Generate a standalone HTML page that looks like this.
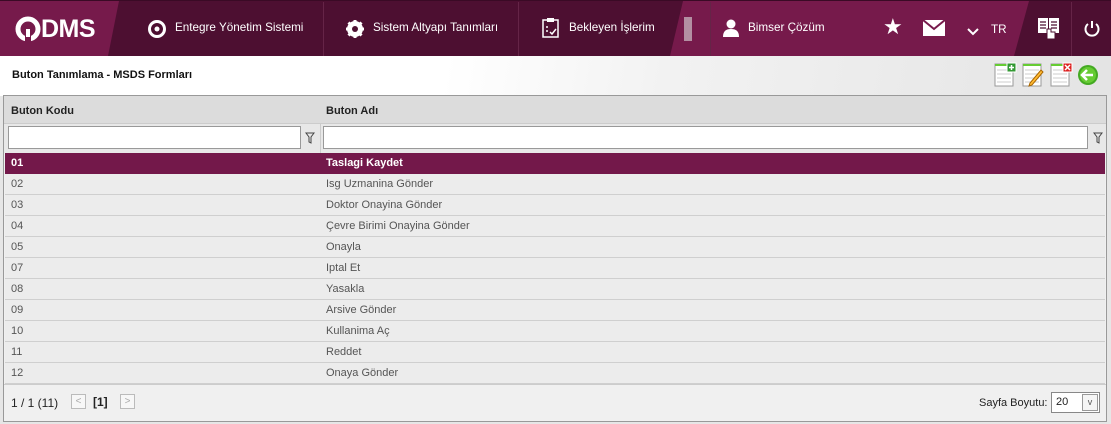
<!DOCTYPE html>
<html><head><meta charset="utf-8"><style>
*{box-sizing:border-box;margin:0;padding:0}
body{width:1111px;height:424px;overflow:hidden;background:#e6e6e6;font-family:"Liberation Sans","DejaVu Sans",sans-serif;position:relative}
.hdr{position:absolute;left:0;top:0;width:1111px;height:56px;background:#4d0f31;border-top:1px solid #3a0a25}
.abs{position:absolute}
.ht{position:absolute;top:20px;color:#fff;font-size:11.7px}
.sep{position:absolute;top:1px;width:1px;height:54px;background:#652447}
.sub{position:absolute;top:56px;left:0;width:1111px;height:40px;background:linear-gradient(100deg,#fff 0,#fff 40%,#f2f2f2 60%,#e4e4e4 100%)}
.title{position:absolute;left:12px;top:69px;font-size:11px;font-weight:bold;color:#111}
.grid{position:absolute;left:3px;top:95px;width:1104px;height:327px;border:1px solid #999;background:#f0f0f0}
.th{position:absolute;left:0;top:0;width:1102px;height:28px;background:#dcdcdc;border-bottom:1px solid #ccc}
.th span{position:absolute;top:9px;font-size:11px;font-weight:bold;color:#222}
.fr{position:absolute;top:28px;left:0;width:1102px;height:29px;background:#e8e8e8}
.inp{position:absolute;top:2px;height:23px;background:#fff;border:1px solid #999}
.row{position:absolute;left:1px;width:1100px;height:21px;background:#ececec;border-bottom:1px solid #cfcfcf;font-size:11px;color:#555}
.row span{position:absolute;top:4px}
.row .a{left:6px}.row .b{left:321px}
.sel{background:#73184a;color:#fff;font-weight:bold;border-bottom:1px solid #73184a}
.ft{position:absolute;left:0;top:288px;width:1102px;height:37px;background:#f0f0f0;border-top:1px solid #ccc;font-size:12px;color:#222}
.pb{position:absolute;top:9px;width:15px;height:15px;border:1px solid #bbb;background:#f7f7f7;color:#aaa;font-size:10px;text-align:center;line-height:13px}
</style></head><body>
<div class="hdr">
 <svg class="abs" style="left:0;top:0" width="1111" height="55">
  <polygon points="0,0 119,0 108,55 0,55" fill="#761a4b"/>
  <polygon points="683,0 1111,0 1111,55 670,55" fill="#761a4b"/>
  <polygon points="1029,0 1111,0 1111,55 1014,55" fill="#4d0f31"/>
 </svg>
 <svg class="abs" style="left:15px;top:15px" width="26" height="26" viewBox="0 0 26 26"><circle cx="13" cy="13" r="10" fill="none" stroke="#fff" stroke-width="5"/><rect x="10" y="19" width="6" height="8" fill="#761a4b"/><rect x="11" y="13" width="4" height="8" fill="#fff"/></svg>
 <div class="abs" style="left:41px;top:14px;color:#fff;font-size:25px;font-weight:bold;letter-spacing:-0.5px">DMS</div>
 <svg class="abs" style="left:147px;top:18px" width="20" height="20" viewBox="0 0 20 20"><circle cx="10" cy="10" r="7.5" fill="none" stroke="#fff" stroke-width="3"/><circle cx="10" cy="10" r="2.5" fill="#fff"/></svg>
 <div class="ht" style="left:175px">Entegre Yönetim Sistemi</div>
 <div class="sep" style="left:323px"></div>
 <svg class="abs" style="left:345px;top:18px" width="20" height="20" viewBox="0 0 20 20"><circle cx="10" cy="10" r="6" fill="none" stroke="#fff" stroke-width="4"/><g stroke="#fff" stroke-width="3"><line x1="10" y1="1" x2="10" y2="19"/><line x1="1" y1="10" x2="19" y2="10"/><line x1="3.5" y1="3.5" x2="16.5" y2="16.5"/><line x1="16.5" y1="3.5" x2="3.5" y2="16.5"/></g><circle cx="10" cy="10" r="3" fill="#4d0f31"/></svg>
 <div class="ht" style="left:373px">Sistem Altyapı Tanımları</div>
 <div class="sep" style="left:518px"></div>
 <svg class="abs" style="left:541px;top:16px" width="20" height="22" viewBox="0 0 20 22"><rect x="2" y="3" width="15" height="17" fill="none" stroke="#fff" stroke-width="1.5"/><rect x="6" y="1" width="7" height="4" fill="#fff"/><path d="M5 10h2M5 14h2M9 15l2 2 4-5" stroke="#fff" fill="none" stroke-width="1.5"/></svg>
 <div class="ht" style="left:569px">Bekleyen İşlerim</div>
 <div class="abs" style="left:684px;top:16px;width:8px;height:24px;background:#b38fa2"></div>
 <div class="sep" style="left:710px"></div>
 <svg class="abs" style="left:722px;top:18px" width="18" height="18" viewBox="0 0 18 18"><circle cx="9" cy="5" r="4.5" fill="#fff"/><path d="M1 18c0-6 3-8 8-8s8 2 8 8z" fill="#fff"/></svg>
 <div class="ht" style="left:748px">Bimser Çözüm</div>
 <div class="abs" style="left:883px;top:13px;color:#fff;font-size:22px">★</div>
 <svg class="abs" style="left:923px;top:19px" width="22" height="16" viewBox="0 0 22 16"><rect width="22" height="16" fill="#fff"/><path d="M0 0l11 9 11-9" stroke="#761a4b" stroke-width="2" fill="none"/></svg>
 <svg class="abs" style="left:967px;top:27px" width="12" height="8"><path d="M1 1l5 5 5-5" stroke="#fff" stroke-width="2" fill="none"/></svg>
 <div class="ht" style="left:991px;top:22px">TR</div>
 <svg class="abs" style="left:1037px;top:15px" width="24" height="24" viewBox="0 0 24 24"><path d="M1 2h10v15H1zM12 2h10v15H12z" fill="#fff"/><path d="M3 6h6M3 9h6M3 12h6M14 6h6M14 9h6M14 12h6" stroke="#4d0f31" stroke-width="1.2"/><path d="M10 13h4v3h4v7h-8z" fill="#fff" stroke="#4d0f31"/></svg>
 <div class="sep" style="left:1071px"></div>
 <svg class="abs" style="left:1084px;top:19px" width="16" height="17" viewBox="0 0 16 17"><path d="M4 4a6.5 6.5 0 1 0 8 0" stroke="#fff" stroke-width="2" fill="none"/><line x1="8" y1="1" x2="8" y2="8" stroke="#fff" stroke-width="2"/></svg>
</div>
<div class="sub"></div>
<div class="title">Buton Tanımlama - MSDS Formları</div>
<svg class="abs" style="left:993px;top:62px" width="110" height="26" viewBox="0 0 110 26">
 <g><rect x="2" y="2" width="18" height="22" fill="#fff" stroke="#999"/><rect x="2" y="2" width="18" height="2" fill="#6c3"/><path d="M4 8h14M4 12h14M4 16h14M4 20h14" stroke="#ccc"/><rect x="14" y="1" width="9" height="9" fill="#393" stroke="#fff"/><path d="M18.5 3v5M16 5.5h5" stroke="#fff" stroke-width="1.5"/></g>
 <g transform="translate(28,0)"><rect x="2" y="2" width="18" height="22" fill="#fff" stroke="#999"/><rect x="2" y="2" width="18" height="2" fill="#6c3"/><path d="M4 8h14M4 12h14M4 16h14M4 20h14" stroke="#ccc"/><path d="M8 24l3-1 11-13-2-2-11 13z" fill="#fb3" stroke="#a60"/></g>
 <g transform="translate(56,0)"><rect x="2" y="2" width="18" height="22" fill="#fff" stroke="#999"/><rect x="2" y="2" width="18" height="2" fill="#6c3"/><path d="M4 8h14M4 12h14M4 16h14M4 20h14" stroke="#ccc"/><rect x="14" y="1" width="9" height="9" fill="#d22" stroke="#fff"/><path d="M16 3l5 5M21 3l-5 5" stroke="#fff" stroke-width="1.5"/></g>
 <circle cx="95" cy="13" r="10" fill="#4a2"/><circle cx="95" cy="13" r="8" fill="#6c3"/><path d="M90 13h10M94 8l-5 5 5 5" stroke="#fff" stroke-width="2.5" fill="none"/>
</svg>
<div class="grid">
 <div class="th"><span style="left:7px">Buton Kodu</span><span style="left:322px">Buton Adı</span></div>
 <div class="fr">
  <div class="inp" style="left:4px;width:293px"></div>
  <svg class="abs" style="left:301px;top:8px" width="10" height="12" viewBox="0 0 10 12"><path d="M1 1h8L6 5v6L4 10V5z" fill="none" stroke="#444"/></svg>
  <div class="abs" style="left:316px;top:0;width:1px;height:29px;background:#ccc"></div>
  <div class="inp" style="left:319px;width:765px"></div>
  <svg class="abs" style="left:1089px;top:8px" width="10" height="12" viewBox="0 0 10 12"><path d="M1 1h8L6 5v6L4 10V5z" fill="none" stroke="#444"/></svg>
 </div>
 <div class="row sel" style="top:57px"><span class="a">01</span><span class="b">Taslagi Kaydet</span></div>
 <div class="row" style="top:78px"><span class="a">02</span><span class="b">Isg Uzmanina Gönder</span></div>
 <div class="row" style="top:99px"><span class="a">03</span><span class="b">Doktor Onayina Gönder</span></div>
 <div class="row" style="top:120px"><span class="a">04</span><span class="b">Çevre Birimi Onayina Gönder</span></div>
 <div class="row" style="top:141px"><span class="a">05</span><span class="b">Onayla</span></div>
 <div class="row" style="top:162px"><span class="a">07</span><span class="b">Iptal Et</span></div>
 <div class="row" style="top:183px"><span class="a">08</span><span class="b">Yasakla</span></div>
 <div class="row" style="top:204px"><span class="a">09</span><span class="b">Arsive Gönder</span></div>
 <div class="row" style="top:225px"><span class="a">10</span><span class="b">Kullanima Aç</span></div>
 <div class="row" style="top:246px"><span class="a">11</span><span class="b">Reddet</span></div>
 <div class="row" style="top:267px"><span class="a">12</span><span class="b">Onaya Gönder</span></div>
 <div class="ft">
  <div class="abs" style="left:7px;top:11px">1 / 1 (11)</div>
  <div class="pb" style="left:67px">&lt;</div>
  <div class="abs" style="left:89px;top:10px;font-weight:bold">[1]</div>
  <div class="pb" style="left:116px">&gt;</div>
  <div class="abs" style="left:975px;top:12px;font-size:11px">Sayfa Boyutu:</div>
  <div class="abs" style="left:1047px;top:7px;width:49px;height:21px;background:#fff;border:1px solid #888;font-size:11px;padding:3px 4px">20</div>
  <div class="abs" style="left:1078px;top:9px;width:16px;height:17px;border:1px solid #999;background:#f5f5f5;font-size:9px;text-align:center;line-height:15px;color:#555">v</div>
 </div>
</div>
</body></html>
